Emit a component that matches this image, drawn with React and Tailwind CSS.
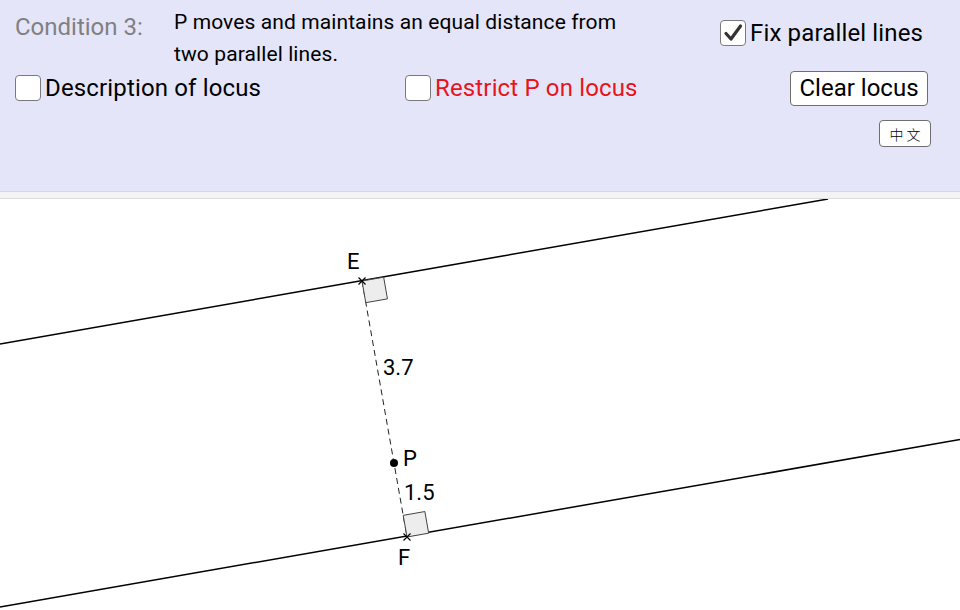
import React from 'react';

const Box = ({ checked }) => (
  <div className="w-[26px] h-[26px] shrink-0 rounded-[4px] border-[1.5px] border-[#7a7a7a] bg-white flex items-center justify-center">
    {checked && (
      <svg width="20" height="20" viewBox="0 0 20 20">
        <path d="M3 10.5 L8 16 L17.5 3" fill="none" stroke="#333" strokeWidth="3.2" strokeLinecap="round" strokeLinejoin="round" />
      </svg>
    )}
  </div>
);

const Check = ({ label, checked, color = 'text-black' }) => (
  <label className="flex items-center gap-[4px]">
    <Box checked={checked} />
    <span className={`text-[24px] leading-none tracking-[0.15px] ${color}`}>{label}</span>
  </label>
);

// line direction and normal used for the right-angle marks
const u = [0.985, -0.172];
const v = [0.172, 0.985];
const s = 22;
const E = [362, 281];
const F = [407, 537];
const sq = (p, a, b) => {
  const p1 = [p[0] + a[0] * s, p[1] + a[1] * s];
  const p2 = [p1[0] + b[0] * s, p1[1] + b[1] * s];
  const p3 = [p[0] + b[0] * s, p[1] + b[1] * s];
  return `${p[0]},${p[1]} ${p1[0]},${p1[1]} ${p2[0]},${p2[1]} ${p3[0]},${p3[1]}`;
};
const cross = ([x, y]) => `M${x - 3.5} ${y - 3.5} L${x + 3.5} ${y + 3.5} M${x + 3.5} ${y - 3.5} L${x - 3.5} ${y + 3.5}`;

const App = () => {
  return (
    <div className="w-[960px] h-[610px] overflow-hidden bg-white font-['Roboto',sans-serif]">
      <div className="h-[192px] bg-[#e5e5fa] border-b border-[#d6d6e6]">
        <div className="flex h-[64px] pl-[15px]">
          <div className="w-[159px] mt-[11px] text-[24px] leading-[32px] text-[#808080]">Condition 3:</div>
          <div className="w-[546px] pt-[6px] text-[21px] leading-[32px] tracking-[0.1px] text-black">
            P moves and maintains an equal distance from
            <br />
            two parallel lines.
          </div>
          <div className="mt-[20px]">
            <Check label="Fix parallel lines" checked />
          </div>
        </div>
        <div className="flex items-center h-[48px] pl-[15px] pr-[32px]">
          <div className="w-[390px]">
            <Check label="Description of locus" />
          </div>
          <Check label="Restrict P on locus" color="text-[#e8141c]" />
          <button className="ml-auto h-[35px] w-[138px] bg-white border-[1.5px] border-[#6e6e6e] rounded-[4px] text-[24px] leading-none text-black">
            Clear locus
          </button>
        </div>
        <div className="flex justify-end pr-[29px] mt-[8px]">
          <button className="w-[52px] h-[27px] bg-white border-[1.5px] border-[#6e6e6e] rounded-[4px] text-[14px] leading-none tracking-[3px] pl-[3px] text-black font-['Noto_Sans_CJK_SC',sans-serif] font-light">
            中文
          </button>
        </div>
      </div>
      <div className="h-[7px] bg-[#f4f4f4] border-b border-[#dcdcdc]"></div>
      <svg width="960" height="411" viewBox="0 199 960 411" className="block">
        <line x1="0" y1="344" x2="828" y2="199" stroke="#000" strokeWidth="1.5" />
        <line x1="0" y1="607" x2="960" y2="439.6" stroke="#000" strokeWidth="1.5" />
        <line x1={E[0]} y1={E[1]} x2={F[0]} y2={F[1]} stroke="#222" strokeWidth="1" strokeDasharray="6 4" />
        <polygon points={sq(E, u, v)} fill="#ededed" stroke="#444" strokeWidth="1" />
        <polygon points={sq(F, u, [-v[0], -v[1]])} fill="#ededed" stroke="#444" strokeWidth="1" />
        <path d={cross(E)} stroke="#000" strokeWidth="1.2" />
        <path d={cross(F)} stroke="#000" strokeWidth="1.2" />
        <circle cx="394" cy="463" r="4" fill="#000" />
        <g fontFamily="Roboto, sans-serif" fontSize="22" fill="#000">
          <text x="347" y="269">E</text>
          <text x="383" y="375">3.7</text>
          <text x="403" y="466">P</text>
          <text x="404" y="500">1.5</text>
          <text x="398" y="565">F</text>
        </g>
      </svg>
    </div>
  );
};

export default App;
